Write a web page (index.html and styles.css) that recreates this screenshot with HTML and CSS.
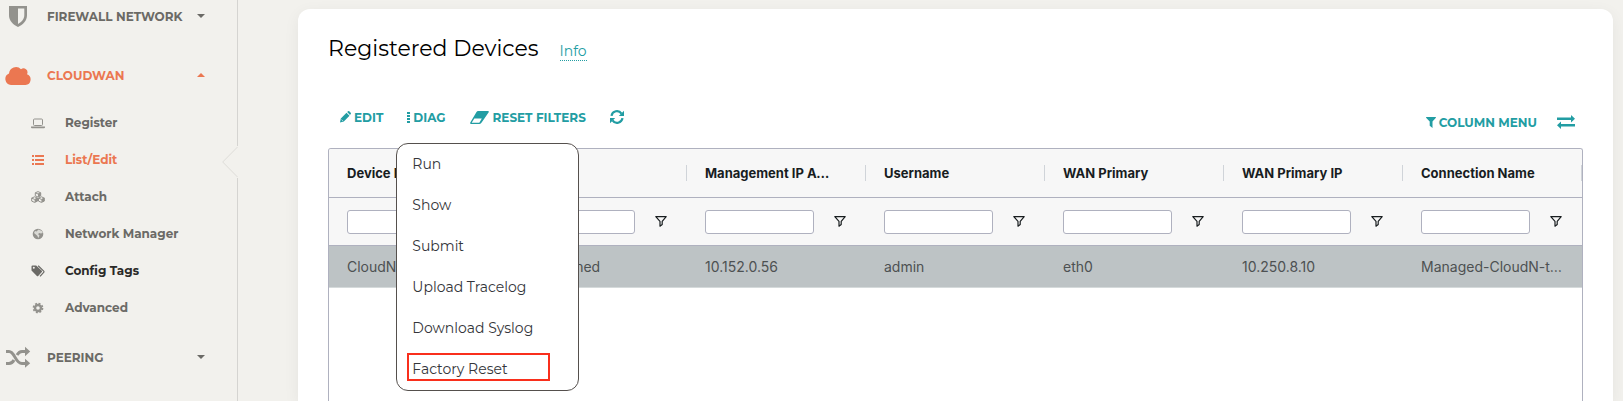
FILE: index.html
```html
<!DOCTYPE html>
<html lang="en">
<head>
<meta charset="utf-8">
<meta name="viewport" content="width=device-width, initial-scale=1">
<title>Registered Devices</title>
<link rel="stylesheet" href="styles.css">
</head>
<body>
<svg class="defs" aria-hidden="true">
  <symbol id="funnel" viewBox="0 0 12 11"><path d="M.8.7h10.4L7.2 5.300v3.200L5 10.200V5.300Z" fill="none" stroke="currentColor" stroke-width="1.200" stroke-linejoin="round"/></symbol>
</svg>
<div class="app">
  <nav class="sidebar" aria-label="Main">
    <a class="group" href="#firewall">
      <svg class="group-icon" viewBox="0 0 26 22"><path d="M4 1h18v9c0 6-4 9.500-9 12-5-2.500-9-6-9-12Z" fill="currentColor"/><path d="M13 3.500h6.300v6.500c0 4-2.500 6.700-6.300 9Z" fill="#f2f1ed"/></svg>
      <span class="group-name">FIREWALL NETWORK</span>
      <svg class="caret" viewBox="0 0 8 4"><path d="M0 0h8L4 4Z" fill="currentColor"/></svg>
    </a>
    <a class="group open" href="#cloudwan">
      <svg class="group-icon" viewBox="0 0 26 22"><path d="M6 21a6 6 0 0 1-2-11.500A7 7 0 0 1 16 5.200a4 4 0 0 1 6 5A5.600 5.600 0 0 1 20.500 21Z" fill="currentColor"/></svg>
      <span class="group-name">CLOUDWAN</span>
      <svg class="caret" viewBox="0 0 8 4"><path d="M0 4h8L4 0Z" fill="currentColor"/></svg>
    </a>
    <div class="items">
      <a class="item" href="#register">
        <svg class="item-icon" viewBox="0 0 14 12"><rect x="2.500" y="2" width="9" height="6.500" rx="1" fill="none" stroke="currentColor"/><path d="M0 9.500h14v1a1 1 0 0 1-1 .7H1a1 1 0 0 1-1-.7Z" fill="currentColor"/></svg>
        <span>Register</span>
      </a>
      <a class="item active" href="#list">
        <svg class="item-icon" viewBox="0 0 14 12"><path d="M1 1h2v2H1ZM4 1h9v2H4ZM1 5h2v2H1ZM4 5h9v2H4ZM1 9h2v2H1ZM4 9h9v2H4Z" fill="currentColor"/></svg>
        <span>List/Edit</span>
      </a>
      <a class="item" href="#attach">
        <svg class="item-icon" viewBox="0 0 14 12"><g fill="none" stroke="currentColor"><path d="M7 .6 9.700 1.800v3L7 6 4.300 4.800v-3ZM4.300 1.800 7 3l2.700-1.200M3.600 5.800l2.900 1.300v3l-2.900 1.300L.7 10.100v-3ZM.7 7.100l2.900 1.300 2.900-1.300M10.400 5.800l2.900 1.300v3l-2.900 1.300-2.900-1.300v-3ZM7.500 7.100l2.900 1.300 2.900-1.300"/></g><path d="M7 3v3l2.700-1.200v-3ZM3.600 8.400v3l2.900-1.300v-3ZM10.400 8.400v3l2.900-1.300v-3Z" fill="currentColor"/></svg>
        <span>Attach</span>
      </a>
      <a class="item" href="#network">
        <svg class="item-icon" viewBox="0 0 14 12"><circle cx="7" cy="6" r="5.300" fill="currentColor"/><path d="M7.500 1.500 11 3l.8 2-2 .5L8.500 5 7 6l1.500 1.500L7.500 10 6 7.500 3 5l1-2 1.500.5Z" fill="#f2f1ed" opacity=".75"/></svg>
        <span>Network Manager</span>
      </a>
      <a class="item hover" href="#tags">
        <svg class="item-icon" viewBox="0 0 14 12"><path d="M.5 1.500a1 1 0 0 1 1-1h3.700l5.600 5.300a1 1 0 0 1 0 1.300l-3.600 3.900a1 1 0 0 1-1.300 0L.5 5.500Z" fill="currentColor"/><circle cx="2.800" cy="2.800" r="1" fill="#f2f1ed"/><path d="M7.200.8l5.500 5.300q.6.600 0 1.200L9 11.300" fill="none" stroke="currentColor" stroke-width="1.200"/></svg>
        <span>Config Tags</span>
      </a>
      <a class="item" href="#advanced">
        <svg class="item-icon" viewBox="0 0 14 12"><circle cx="7" cy="6" r="3" fill="none" stroke="currentColor" stroke-width="2.400"/><circle cx="7" cy="6" r="4.600" fill="none" stroke="currentColor" stroke-width="1.500" stroke-dasharray="2 1.613"/></svg>
        <span>Advanced</span>
      </a>
    </div>
    <a class="group" href="#peering">
      <svg class="group-icon" viewBox="0 0 26 22"><g fill="none" stroke="currentColor" stroke-width="3"><path d="M1 5.500h3c6 0 6 12 13 12h4M1 17.500h3c2.500 0 4-1.600 5-3.500M12 9c1.200-2 2.600-3.500 5-3.500h4"/></g><path d="M20 .8v9.400l5.200-4.700ZM20 12.800v9l5.200-4.500Z" fill="currentColor"/></svg>
      <span class="group-name">PEERING</span>
      <svg class="caret" viewBox="0 0 8 4"><path d="M0 0h8L4 4Z" fill="currentColor"/></svg>
    </a>
    <svg class="notch" viewBox="0 0 16 32" aria-hidden="true"><path d="M15 0 0 16l15 16h1V0Z" fill="#f2f1ed"/><path d="M15.500 1 .7 16l14.800 15" fill="none" stroke="#dddcd8"/></svg>
  </nav>

  <main class="content">
    <section class="card">
      <header class="heading">
        <h1>Registered Devices</h1>
        <a class="info" href="#info">Info</a>
      </header>
      <div class="toolbar">
        <div class="tools">
          <button type="button" class="tool"><svg class="i-pencil" viewBox="0 0 11 12"><path d="m0 11.500.8-4L6.500 1.700 9.500 4.700 3.800 10.600ZM7.200 1 8 .3q.7-.5 1.300 0l1.400 1.500q.6.600 0 1.300l-.7.900Z" fill="currentColor"/><path d="m1.600 8.600 1.200 1.200" stroke="#fff" stroke-width=".7"/></svg>EDIT</button>
          <div class="dropdown">
            <button type="button" class="tool" aria-haspopup="menu" aria-expanded="true"><svg class="i-dots" viewBox="0 0 3 11"><path d="M0 0h3v2H0ZM0 3h3v2H0ZM0 6h3v2H0ZM0 9h3v2H0Z" fill="currentColor"/></svg>DIAG</button>
            <div class="menu" role="menu">
              <button type="button" role="menuitem">Run</button>
              <button type="button" role="menuitem">Show</button>
              <button type="button" role="menuitem">Submit</button>
              <button type="button" role="menuitem">Upload Tracelog</button>
              <button type="button" role="menuitem">Download Syslog</button>
              <button type="button" role="menuitem" class="marked">Factory Reset</button>
            </div>
          </div>
          <button type="button" class="tool"><svg class="i-eraser" viewBox="0 0 19 13"><path d="M8 0h10q1.200.2.700 1.300L12 11q-1.200 2-2.500 2H1Q-.2 12.700.3 11.600L6.500 1Q7.200 0 8 0Z" fill="currentColor"/><path d="M4.300 7.500h7.500L9.300 11.700H1.700Z" fill="#fff"/></svg>RESET FILTERS</button>
          <button type="button" class="tool" aria-label="Refresh"><svg class="i-refresh" viewBox="0 0 14 14"><g fill="none" stroke="currentColor" stroke-width="2.200"><path d="M1.500 5.800A5.500 5.500 0 0 1 11.500 3.600M12.500 8.200A5.500 5.500 0 0 1 2.500 10.400"/></g><path d="M14 .7v5.200H8.800ZM0 13.300V8.100h5.200Z" fill="currentColor"/></svg></button>
        </div>
        <div class="tools end">
          <button type="button" class="tool"><svg class="i-filter" viewBox="0 0 10 11"><path d="M.3 0h9.400q.5.400 0 1L6.500 4.500V11L3.700 8.800V4.500L.3 1q-.5-.6 0-1Z" fill="currentColor"/></svg>COLUMN MENU</button>
          <button type="button" class="tool" aria-label="Swap"><svg class="i-swap" viewBox="0 0 18 14"><path d="M0 2.500h14V0l4 3.800-4 3.800V5H0ZM18 9H4V6.600L0 10.300 4 14v-2.400h14Z" fill="currentColor"/></svg></button>
        </div>
      </div>
      <div class="grid">
        <table>
          <thead>
            <tr class="names"><th><span>Device Name</span></th><th><span>State</span></th><th><span>Management IP Address</span></th><th><span>Username</span></th><th><span>WAN Primary</span></th><th><span>WAN Primary IP</span></th><th><span>Connection Name</span></th></tr>
            <tr class="filters">
              <td><div class="filter"><input type="text" aria-label="Filter device name"><button type="button" aria-label="Filter options"><svg><use href="#funnel"/></svg></button></div></td>
              <td><div class="filter"><input type="text" aria-label="Filter state"><button type="button" aria-label="Filter options"><svg><use href="#funnel"/></svg></button></div></td>
              <td><div class="filter"><input type="text" aria-label="Filter management IP"><button type="button" aria-label="Filter options"><svg><use href="#funnel"/></svg></button></div></td>
              <td><div class="filter"><input type="text" aria-label="Filter username"><button type="button" aria-label="Filter options"><svg><use href="#funnel"/></svg></button></div></td>
              <td><div class="filter"><input type="text" aria-label="Filter WAN primary"><button type="button" aria-label="Filter options"><svg><use href="#funnel"/></svg></button></div></td>
              <td><div class="filter"><input type="text" aria-label="Filter WAN primary IP"><button type="button" aria-label="Filter options"><svg><use href="#funnel"/></svg></button></div></td>
              <td><div class="filter"><input type="text" aria-label="Filter connection name"><button type="button" aria-label="Filter options"><svg><use href="#funnel"/></svg></button></div></td>
            </tr>
          </thead>
          <tbody>
            <tr><td>CloudN</td><td>unattached</td><td>10.152.0.56</td><td>admin</td><td>eth0</td><td>10.250.8.10</td><td>Managed-CloudN-test</td></tr>
          </tbody>
        </table>
      </div>
    </section>
  </main>
</div>
</body>
</html>
```

FILE: styles.css
```css
* { box-sizing: border-box; }
html, body { height: 100%; }
body { margin: 0; overflow: hidden; background: #f2f1ed; color: #181d1f; font-family: Montserrat, Inter, sans-serif; }
button { margin: 0; padding: 0; border: 0; background: none; color: inherit; font: inherit; cursor: pointer; }
a { color: inherit; text-decoration: none; }
svg { display: block; flex: none; }
.defs { position: absolute; width: 0; height: 0; }

.app { display: flex; height: 100%; }
.sidebar { position: relative; flex: none; width: 238px; border-right: 1px solid #d5d4d1; color: #6b6a66; font-size: 12px; font-weight: 700; }
.group { display: flex; align-items: center; height: 32px; padding: 0 32px 0 5px; }
.group.open { margin-top: 27px; color: #eb7751; }
.group-icon { width: 26px; height: 22px; color: #93928d; }
.open .group-icon { color: inherit; }
.group-name { flex: 1; margin-left: 16px; }
.caret { width: 8px; height: 4px; }
.items { padding: 13px 0 15px; }
.item { display: flex; align-items: center; gap: 20px; height: 37px; padding-left: 31px; }
.item-icon { width: 14px; height: 12px; color: #93928d; }
.item.active, .item.active .item-icon { color: #eb7751; }
.item.hover { color: #2b2a28; }
.item.hover .item-icon { color: #6b6a66; }
.notch { position: absolute; top: 146px; right: -1px; width: 16px; height: 32px; }

.content { flex: 1; min-width: 0; padding: 9px 10px 0 60px; }
.card { display: flex; flex-direction: column; height: 100%; padding: 24px 30px 0; border-radius: 12px 12px 0 0; background: #fff; box-shadow: 0 4px 16px rgba(0, 0, 0, .06); }
.heading { display: flex; align-items: baseline; gap: 21px; color: #000; }
h1 { margin: 0; font-size: 22px; line-height: 32px; font-weight: 400; }
.info { border-bottom: 1px dotted #229da3; color: #229da3; font-size: 14px; line-height: 18px; font-weight: 400; }
.toolbar { display: flex; justify-content: space-between; padding: 41px 8px 15px 12px; color: #229da3; font-size: 12px; font-weight: 700; }
.tools { display: flex; align-items: center; gap: 24px; height: 22px; }
.tools.end { margin-top: 5px; gap: 20px; }
.tool { display: flex; align-items: center; gap: 3px; height: 22px; }
.i-pencil { width: 11px; height: 12px; }
.i-dots { width: 3px; height: 11px; }
.i-eraser { width: 19px; height: 13px; margin-right: 1px; }
.i-refresh { width: 14px; height: 14px; }
.i-filter { width: 10px; height: 11px; }
.i-swap { width: 18px; height: 14px; }
.dropdown { position: relative; }
.menu { position: absolute; z-index: 1; top: 37px; left: -11px; width: 183px; padding: 0 11px 7px 10px; border: 1px solid #55504d; border-radius: 12px; background: #fff; }
.menu button { display: block; width: 100%; height: 28px; margin-top: 13px; padding: 0 5px; color: #34353a; font-size: 14px; font-weight: 400; text-align: left; }
.menu button:first-child { margin-top: 6px; }
.menu .marked { width: 143px; margin: 11px 0 2px; padding: 4px 3px 0; border: 2px solid #f92f1c; }

.grid { flex: 1; min-height: 0; overflow: hidden; border: 1px solid #afb1bf; border-bottom: 0; border-radius: 3px 3px 0 0; font-family: Inter, sans-serif; }
table { width: 100%; table-layout: fixed; border-collapse: separate; border-spacing: 0; font-size: 14px; }
th, td { padding: 0 18px; text-align: left; white-space: nowrap; }
thead th, thead td { border-bottom: 1px solid #afb1bf; background: #f7f7f7; }
th { height: 49px; padding-right: 0; font-size: 13px; font-weight: 700; }
th span { display: block; height: 16px; margin-right: -1px; padding-right: 34px; overflow: hidden; border-right: 2px solid #d0d4d9; line-height: 16px; text-overflow: ellipsis; }
.filters td { height: 48px; padding-right: 20px; }
.filter { display: flex; align-items: center; gap: 20px; }
.filter input { flex: 1; min-width: 0; height: 24px; padding: 0 6px; border: 1px solid #afb1bf; border-radius: 3px; background: #fff; font: inherit; }
.filter svg { width: 12px; height: 11px; }
tbody td { height: 42px; overflow: hidden; border-bottom: 1px solid #d5dadb; background: #bdc3c5; color: #4d5152; text-overflow: ellipsis; }
```
